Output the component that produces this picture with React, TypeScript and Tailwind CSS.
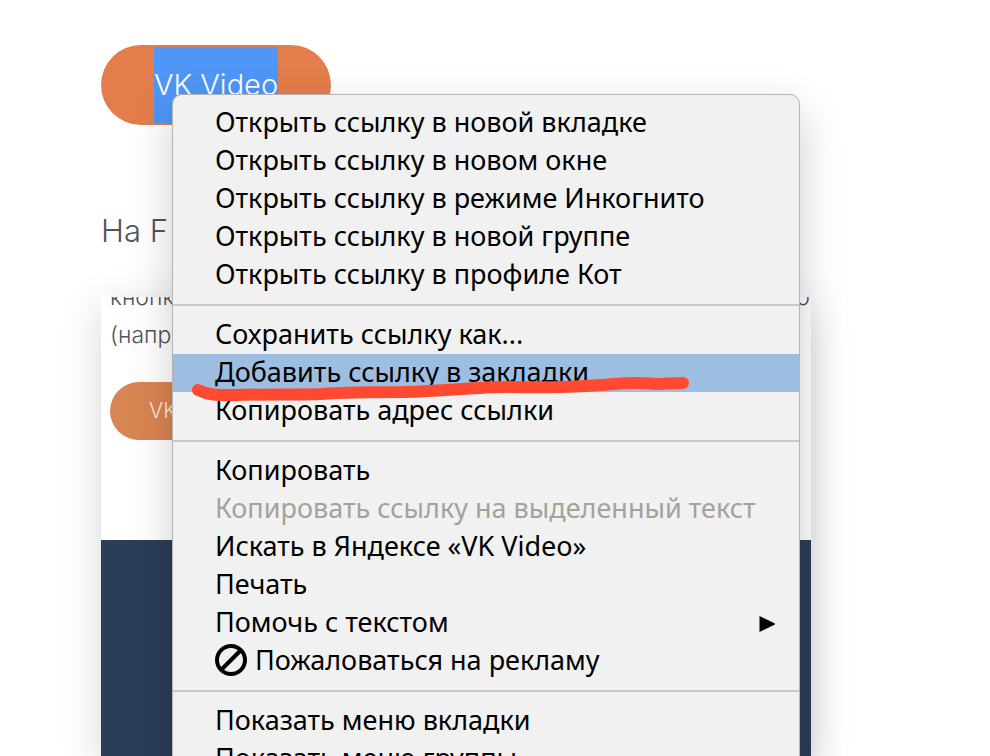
import { clsx } from "clsx";

type Item = {
  label: string;
  active?: boolean;
  disabled?: boolean;
  submenu?: boolean;
  blocked?: boolean;
};

const GROUPS: Item[][] = [
  [
    { label: "Открыть ссылку в новой вкладке" },
    { label: "Открыть ссылку в новом окне" },
    { label: "Открыть ссылку в режиме Инкогнито" },
    { label: "Открыть ссылку в новой группе" },
    { label: "Открыть ссылку в профиле Кот" },
  ],
  [
    { label: "Сохранить ссылку как..." },
    { label: "Добавить ссылку в закладки", active: true },
    { label: "Копировать адрес ссылки" },
  ],
  [
    { label: "Копировать" },
    { label: "Копировать ссылку на выделенный текст", disabled: true },
    { label: "Искать в Яндексе «VK Video»" },
    { label: "Печать" },
    { label: "Помочь с текстом", submenu: true },
    { label: "Пожаловаться на рекламу", blocked: true },
  ],
  [{ label: "Показать меню вкладки" }, { label: "Показать меню группы" }],
];

function BlockedIcon() {
  return (
    <svg viewBox="0 0 32 32" className="mr-2 h-8 w-8 shrink-0" fill="none" stroke="currentColor" strokeWidth="4" aria-hidden="true">
      <circle cx="16" cy="16" r="14" />
      <path d="M6.5 25.5 25.5 6.5" />
    </svg>
  );
}

function MenuItem({ item }: { item: Item }) {
  return (
    <button
      type="button"
      role="menuitem"
      disabled={item.disabled}
      className={clsx(
        "flex h-[38px] w-full items-center whitespace-nowrap pr-6 pb-0.5 pl-[42px] text-left text-[27px] leading-9",
        item.active && "bg-[#9ebee1]",
        item.disabled ? "text-[#a5a299]" : "text-black"
      )}
    >
      {item.blocked && <BlockedIcon />}
      <span>{item.label}</span>
      {item.submenu && (
        <svg viewBox="0 0 16 16" className="mt-1 ml-auto h-4 w-4" aria-hidden="true">
          <path d="M0.5 0 15.5 7.2Q16.5 8 15.5 8.8L0.5 16Z" fill="currentColor" />
        </svg>
      )}
    </button>
  );
}

function ContextMenu() {
  return (
    <div
      role="menu"
      className="absolute top-[94px] left-[172px] w-[628px] rounded-[10px] border border-[#b4b4b4] bg-[#f1f1f1] py-[9px] font-['Noto_Sans',sans-serif] shadow-[0_16px_44px_rgba(0,0,0,0.2)]"
    >
      {GROUPS.map((group, i) => (
        <div key={i}>
          {i > 0 && <div role="separator" className="my-[10px] h-[2px] bg-[#c8c8c8]" />}
          {group.map((item) => (
            <MenuItem key={item.label} item={item} />
          ))}
        </div>
      ))}
      <svg viewBox="0 0 500 30" className="pointer-events-none absolute top-[279px] left-[18px] h-[30px] w-[500px]" aria-hidden="true">
        <path
          d="M7 16C19 22 29 21 45 21C75 20 105 21 130 20C160 18 190 18 215 18C255 17 285 13 315 13C360 14 385 13 410 11C435 9 445 8 465 10L492 9"
          fill="none"
          stroke="#ff4a31"
          strokeWidth="12"
          strokeLinecap="round"
          strokeLinejoin="round"
        />
      </svg>
    </div>
  );
}

export default function App() {
  return (
    <main className="relative h-screen overflow-hidden bg-white font-['Inter',sans-serif] text-[#515458]">
      <div className="flex h-full max-w-[811px] flex-col pt-[45px] pl-[101px]">
        <a href="#video" className="flex h-20 w-[230px] shrink-0 items-center justify-center rounded-full bg-[#e37e4c] py-[2px] text-[29px] font-light text-white">
          <span className="flex h-full items-center bg-[#4f96f7]">VK Video</span>
        </a>
        <h2 className="mt-[86px] text-[31px] leading-10 font-light">На F</h2>
        <section className="mt-[46px] flex flex-1 flex-col shadow-[0_10px_40px_rgba(0,0,0,0.16)]">
          <div className="flex h-[243px] shrink-0 flex-col justify-end overflow-hidden bg-white px-[9px] pb-[100px]">
            <p className="text-[23px] leading-[38px] font-light">
              <span className="flex justify-between">
                <span>кнопк</span>
                <span className="-mr-2">о</span>
              </span>
              <span>(напр</span>
            </p>
            <a href="#video-small" className="mt-7 flex h-[58px] w-[168px] shrink-0 items-center justify-center rounded-full bg-[#d98552] text-[21px] font-light text-[#fbe9dc]">
              VK Video
            </a>
          </div>
          <div className="flex-1 bg-[#2a3e58]" />
        </section>
      </div>
      <ContextMenu />
    </main>
  );
}
